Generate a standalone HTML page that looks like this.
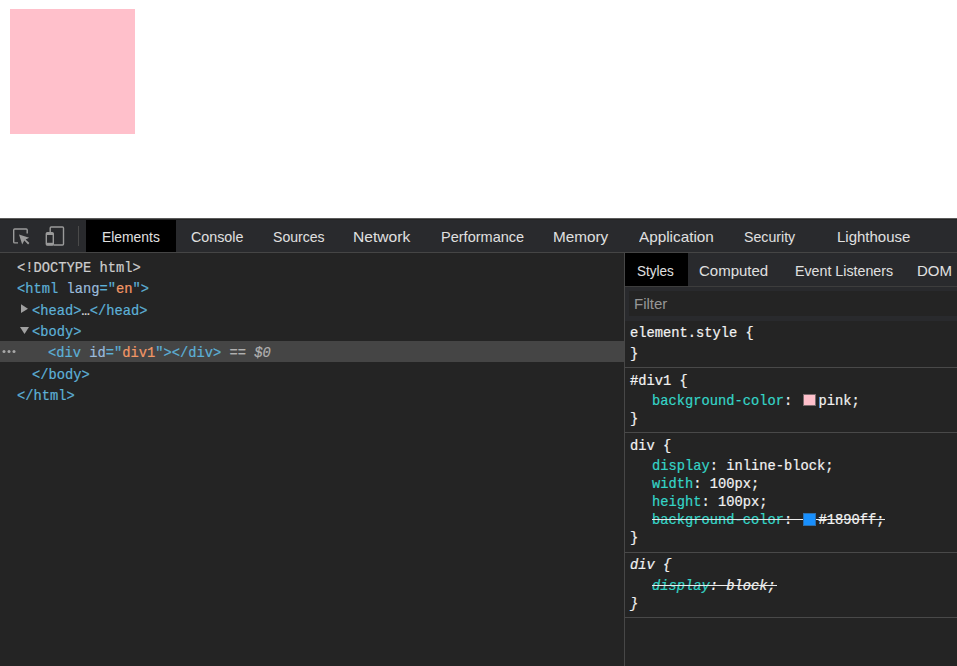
<!DOCTYPE html>
<html><head><meta charset="utf-8">
<style>
html,body{margin:0;padding:0;}
body{width:957px;height:666px;position:relative;overflow:hidden;background:#fff;font-family:"Liberation Sans",sans-serif;}
.abs{position:absolute;}
#pink{left:10px;top:9px;width:125px;height:125px;background:#ffc0cb;}
#dt{left:0;top:218px;width:957px;height:448px;background:#242424;}
#b1{left:0;top:218px;width:957px;height:1px;background:#5a5a5a;}
#b2{left:0;top:219px;width:957px;height:1px;background:#232323;}
#tb{left:0;top:220px;width:957px;height:32px;background:#292a2d;}
#tbb{left:0;top:252px;width:957px;height:1px;background:#454545;}
.tab{position:absolute;font-size:15px;line-height:17px;color:#e0e0e0;white-space:pre;}
.sel{position:absolute;background:#000;}
.mono{position:absolute;font-family:"Liberation Mono",monospace;font-size:13.75px;line-height:16px;white-space:pre;-webkit-text-stroke-width:0.2px;}
.tag{color:#5db0d7}.an{color:#9bbbdc}.av{color:#f29766}.dt{color:#cdcdcd}
.pn{color:#35d4c7}.pv{color:#f2f2f2}.sl{color:#f2f2f2}
.strike{text-decoration:line-through;text-decoration-color:#e8e8e8;}
.sep{position:absolute;left:625px;width:332px;height:1px;background:#494949;}
</style></head><body>
<div id="pink" class="abs"></div>
<div id="dt" class="abs"></div>
<div id="b1" class="abs"></div>
<div id="b2" class="abs"></div>
<div id="tb" class="abs"></div>
<div id="tbb" class="abs"></div>
<!-- toolbar icons -->
<svg class="abs" style="left:0;top:0" width="90" height="252" viewBox="0 0 90 252">
  <g fill="none" stroke="#9a9a9a" stroke-width="1.4">
    <path d="M18,242.9 H14.7 a1,1 0 0 1 -1,-1 V230 a1,1 0 0 1 1,-1 H26.2 a1,1 0 0 1 1,1 V233.5"/>
    <path d="M50.2,232.5 V228 a1,1 0 0 1 1,-1 H62.5 a1,1 0 0 1 1,1 V244 a1,1 0 0 1 -1,1 H53.5"/>
    <rect x="46.3" y="232.8" width="7" height="12.2" rx="1"/>
  </g>
  <path d="M19,234.5 L29.2,237.8 L25.6,239.4 L29.4,243.1 L28.1,244.4 L24.3,240.6 L22.2,244.4 Z" fill="#9a9a9a"/>
  <rect x="46.3" y="233" width="7" height="2" fill="#9a9a9a"/>
  <rect x="46.3" y="242.8" width="7" height="2.5" fill="#9a9a9a"/>
  <rect x="78" y="226" width="1" height="20" fill="#4a4a4a"/>
</svg>
<div class="sel" style="left:86px;top:220px;width:90px;height:32px;"></div>
<div class="tab" style="left:101.5px;top:228px;transform:scaleX(0.925);transform-origin:0 0;">Elements</div>
<div class="tab" style="left:191px;top:228px;transform:scaleX(0.953);transform-origin:0 0;">Console</div>
<div class="tab" style="left:273px;top:228px;transform:scaleX(0.938);transform-origin:0 0;">Sources</div>
<div class="tab" style="left:353px;top:228px;transform:scaleX(1.04);transform-origin:0 0;">Network</div>
<div class="tab" style="left:441px;top:228px;transform:scaleX(0.969);transform-origin:0 0;">Performance</div>
<div class="tab" style="left:552.5px;top:228px;transform:scaleX(1.02);transform-origin:0 0;">Memory</div>
<div class="tab" style="left:638.5px;top:228px;transform:scaleX(1.02);transform-origin:0 0;">Application</div>
<div class="tab" style="left:743.5px;top:228px;transform:scaleX(0.944);transform-origin:0 0;">Security</div>
<div class="tab" style="left:837px;top:228px;transform:scaleX(1);transform-origin:0 0;">Lighthouse</div>

<!-- elements tree -->
<div class="abs" style="left:0;top:341px;width:624px;height:21px;background:#454545;"></div>
<svg class="abs" style="left:0;top:0" width="40" height="400" viewBox="0 0 40 400">
  <circle cx="4" cy="351.6" r="1.5" fill="#a8a8a8"/>
  <circle cx="9" cy="351.6" r="1.5" fill="#a8a8a8"/>
  <circle cx="14" cy="351.6" r="1.5" fill="#a8a8a8"/>
  <path d="M21,304.3 L28,308.7 L21,313 Z" fill="#a0a0a0"/>
  <path d="M20,327 L29,327 L24.5,334 Z" fill="#a0a0a0"/>
</svg>
<div class="mono" style="left:17px;top:261px;"><span class="dt">&lt;!DOCTYPE html&gt;</span></div>
<div class="mono" style="left:17px;top:282.3px;"><span class="tag">&lt;html</span> <span class="an">lang</span><span class="tag">="</span><span class="av">en</span><span class="tag">"&gt;</span></div>
<div class="mono" style="left:32px;top:303.7px;"><span class="tag">&lt;head&gt;</span><span style="color:#e0e0e0">…</span><span class="tag">&lt;/head&gt;</span></div>
<div class="mono" style="left:32px;top:325px;"><span class="tag">&lt;body&gt;</span></div>
<div class="mono" style="left:48px;top:346.3px;"><span class="tag">&lt;div</span> <span class="an">id</span><span class="tag">="</span><span class="av">div1</span><span class="tag">"&gt;&lt;/div&gt;</span><span style="color:#b0b0b0"> == <i>$0</i></span></div>
<div class="mono" style="left:32px;top:367.7px;"><span class="tag">&lt;/body&gt;</span></div>
<div class="mono" style="left:17px;top:389px;"><span class="tag">&lt;/html&gt;</span></div>

<!-- styles pane -->
<div class="abs" style="left:624px;top:253px;width:1px;height:413px;background:#474747;"></div>
<div class="abs" style="left:625px;top:253px;width:332px;height:33px;background:#292a2d;"></div>
<div class="abs" style="left:625px;top:286px;width:332px;height:1px;background:#3d3d3d;"></div>
<div class="abs" style="left:625px;top:287px;width:332px;height:34px;background:#292a2d;"></div>
<div class="abs" style="left:629px;top:291px;width:328px;height:25px;background:#242424;"></div>
<div class="sel" style="left:625px;top:253px;width:63px;height:33px;"></div>
<div class="tab" style="left:637px;top:262px;transform:scaleX(0.9);transform-origin:0 0;">Styles</div>
<div class="tab" style="left:699px;top:262px;">Computed</div>
<div class="tab" style="left:795px;top:262px;transform:scaleX(0.949);transform-origin:0 0;">Event Listeners</div>
<div class="tab" style="left:917px;top:262px;">DOM</div>
<div class="tab" style="left:634px;top:295px;color:#969696;">Filter</div>

<div class="sep" style="top:367px"></div>
<div class="sep" style="top:432px"></div>
<div class="sep" style="top:552px"></div>
<div class="sep" style="top:617px"></div>

<div class="mono sl" style="left:630px;top:326px;">element.style {</div>
<div class="mono sl" style="left:630px;top:347px;">}</div>

<div class="mono sl" style="left:630px;top:374px;">#div1 {</div>
<div class="mono" style="left:652px;top:394px;"><span class="pn">background-color</span><span class="pv">: </span><span style="display:inline-block;width:18px"></span><span class="pv">pink;</span></div>
<div class="abs" style="left:803px;top:394px;width:11px;height:10px;background:#ffc0cb;border:1px solid #7a6a6d;"></div>
<div class="mono sl" style="left:630px;top:412px;">}</div>

<div class="mono sl" style="left:630px;top:439px;">div {</div>
<div class="mono" style="left:652px;top:459px;"><span class="pn">display</span><span class="pv">: inline-block;</span></div>
<div class="mono" style="left:652px;top:477px;"><span class="pn">width</span><span class="pv">: 100px;</span></div>
<div class="mono" style="left:652px;top:495px;"><span class="pn">height</span><span class="pv">: 100px;</span></div>
<div class="mono " style="left:652px;top:513px;"><span class="pn">background-color</span><span class="pv">: </span><span style="display:inline-block;width:18px"></span><span class="pv">#1890ff;</span></div>
<div class="abs" style="left:803px;top:513px;width:11px;height:11px;background:#1890ff;border:1px solid #2a6fb0;"></div>
<div class="abs" style="left:652px;top:519px;width:151px;height:1px;background:#ececec;"></div>
<div class="abs" style="left:816px;top:519px;width:69px;height:1px;background:#ececec;"></div>
<div class="mono sl" style="left:630px;top:531px;">}</div>

<div class="mono sl" style="left:630px;top:558px;font-style:italic;">div {</div>
<div class="mono " style="left:652px;top:579px;font-style:italic;"><span class="pn">display</span><span class="pv">: block;</span></div>
<div class="abs" style="left:652px;top:585px;width:125px;height:1px;background:#ececec;"></div>
<div class="mono sl" style="left:630px;top:597px;font-style:italic;">}</div>
</body></html>
